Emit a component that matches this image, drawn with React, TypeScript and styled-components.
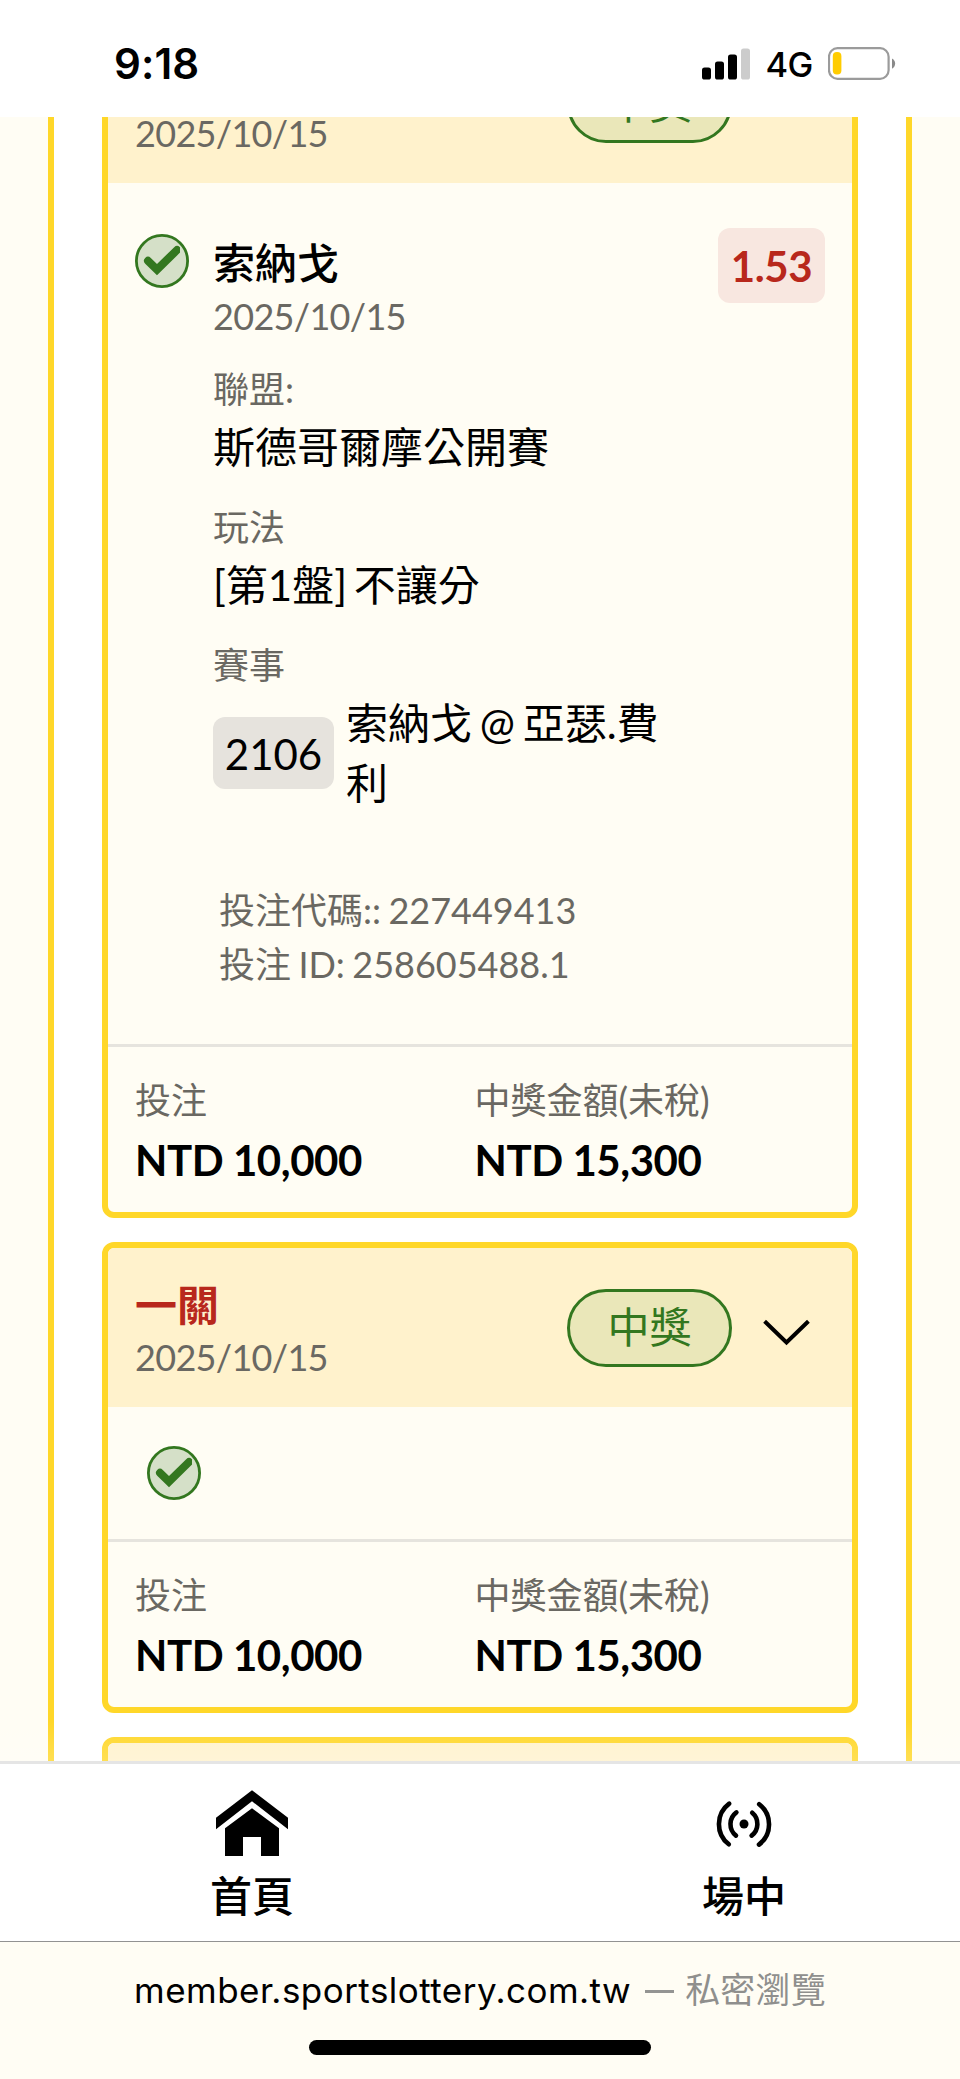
import React from "react";
import styled, { createGlobalStyle } from "styled-components";

const color = {
  cream: "#fffdf4",
  yellow: "#ffd729",
  header: "#fff2cc",
  green: "#33771f",
  red: "#b8281c",
  grey: "#6a6862",
  line: "#e6e4de",
};

const GlobalStyle = createGlobalStyle`
  * { box-sizing: border-box; }
  body {
    margin: 0;
    background: ${color.cream};
    color: #000;
    font-family: Lato, "Noto Sans CJK TC", sans-serif;
    -webkit-font-smoothing: antialiased;
  }
  svg { display: block; flex: none; }
`;

const Screen = styled.div`
  width: 960px;
  height: 2079px;
  display: flex;
  flex-direction: column;
  overflow: hidden;
`;

/* ---------- status bar ---------- */

const StatusBar = styled.header`
  flex: none;
  height: 117px;
  padding: 10px 64px 0 114px;
  display: flex;
  align-items: center;
  justify-content: space-between;
  background: #fff;
  font-family: Inter, sans-serif;
`;

const Clock = styled.span`
  font-size: 42px;
  line-height: 54px;
  font-weight: 600;
  letter-spacing: 0.1px;
`;

const StatusIcons = styled.div`
  display: flex;
  align-items: center;
`;

const Network = styled.span`
  width: 78px;
  padding-top: 3px;
  text-align: center;
  font-size: 34.5px;
  line-height: 44px;
  font-weight: 500;
  letter-spacing: -0.6px;
`;

/* ---------- scrolled page ---------- */

const Viewport = styled.main`
  position: relative;
  flex: 1;
  min-height: 0;
  padding: 0 48px;
  overflow: hidden;
  background: ${color.cream};

  &::after {
    content: "";
    position: absolute;
    inset: auto 0 0 0;
    height: 40px;
    background: linear-gradient(rgba(255, 255, 255, 0), rgba(255, 255, 255, 0.2));
  }
`;

const Sheet = styled.div`
  height: 1900px;
  padding: 0 48px;
  border: solid ${color.yellow};
  border-width: 0 6px;
  background: #fff;
`;

const CardList = styled.div`
  display: flex;
  flex-direction: column;
  gap: 24px;
  margin-top: -99px;
`;

const Card = styled.article`
  border: 6px solid ${color.yellow};
  border-radius: 12px;
  overflow: hidden;
  background: ${color.cream};
`;

const CardHeader = styled.div`
  display: flex;
  height: 159px;
  padding: 0 42px 23px 27px;
  background: ${color.header};
`;

const Heading = styled.div`
  flex: 1;
  display: flex;
  flex-direction: column;
  justify-content: flex-end;
`;

const Title = styled.h2`
  margin: 0;
  font-size: 42px;
  line-height: 50px;
  font-weight: 700;
  color: ${color.red};
`;

const Muted = styled.div`
  font-size: 36px;
  line-height: 54px;
  color: ${color.grey};
`;

const DateText = styled(Muted)`
  letter-spacing: -0.68px;
`;

const Status = styled.span`
  display: flex;
  align-items: center;
  justify-content: center;
  width: 165px;
  height: 78px;
  margin: 41px 30px 0 0;
  padding-bottom: 2px;
  border: 3px solid ${color.green};
  border-radius: 39px;
  background: #eae7b9;
  color: ${color.green};
  font-size: 42px;
  line-height: 70px;
`;

const ChevronSlot = styled.div<{ $open: boolean }>`
  height: 27px;
  margin-top: ${({ $open }) => ($open ? 62 : 71)}px;
  transform: ${({ $open }) => ($open ? "scaleY(-1)" : "none")};
`;

const Body = styled.div`
  display: flex;
  align-items: flex-start;
  height: 861px;
  padding: 45px 27px 0;
`;

const CollapsedBody = styled.div`
  height: 132px;
  padding: 39px;
`;

const CheckSlot = styled.div`
  padding-top: 6px;
  margin-right: 24px;
`;

const Details = styled.div`
  flex: 1;
  padding-top: 10px;
`;

const Name = styled.div`
  font-size: 42px;
  line-height: 51px;
  font-weight: 500;
`;

const Field = styled.div<{ $gap?: number }>`
  margin-top: ${({ $gap = 22 }) => $gap}px;
`;

const Value = styled.div`
  font-size: 42px;
  line-height: 62px;
  word-spacing: -4px;
`;

const EventRow = styled.div`
  display: flex;
  align-items: center;
  gap: 12px;
  margin-top: 1px;
`;

const EventCode = styled.span`
  flex: none;
  width: 121px;
  height: 72px;
  border-radius: 12px;
  background: #e6e3dd;
  text-align: center;
  font-size: 42px;
  line-height: 74px;
`;

const EventName = styled.span`
  width: 320px;
  font-size: 42px;
  line-height: 60px;
  word-spacing: -3px;
`;

const Codes = styled.div`
  margin: 70px 0 0 6px;
  word-spacing: -1.8px;
`;

const Odds = styled.span`
  width: 107px;
  height: 75px;
  border-radius: 12px;
  background: #f8e7e0;
  color: ${color.red};
  text-align: center;
  font-size: 42px;
  line-height: 77px;
  font-weight: 700;
  letter-spacing: -0.4px;
`;

const Totals = styled.div`
  display: grid;
  grid-template-columns: 339.5px 1fr;
  height: 168px;
  padding: 26px 27px 0;
  border-top: 3px solid ${color.line};
`;

const Amount = styled.div`
  font-size: 42px;
  line-height: 66px;
  font-weight: 700;
  letter-spacing: -0.44px;
`;

/* ---------- bottom bars ---------- */

const TabBar = styled.nav`
  flex: none;
  display: flex;
  justify-content: space-between;
  height: 180px;
  padding: 24px 174px 0 210px;
  border-top: 3px solid #e5e5e5;
  background: #fff;
`;

const Tab = styled.a`
  display: flex;
  flex-direction: column;
  align-items: center;
  gap: 9px;
  font-size: 42px;
  line-height: 54px;
  font-weight: 500;
`;

const AddressBar = styled.footer`
  flex: none;
  display: flex;
  flex-direction: column;
  align-items: center;
  height: 138px;
  padding-top: 26px;
  border-top: 1px solid #929292;
  background: ${color.cream};
`;

const Address = styled.div`
  display: flex;
  align-items: center;
  font-family: Inter, "Noto Sans CJK TC", sans-serif;
  font-size: 35px;
  line-height: 44px;
  letter-spacing: 0.46px;
  white-space: nowrap;
`;

const PrivateLabel = styled.span`
  display: flex;
  align-items: center;
  margin-left: 14px;
  letter-spacing: 0.2px;
  color: #8f8f8d;
`;

const Dash = styled.span`
  width: 29px;
  height: 3px;
  margin: 2px 11px 0 0;
  background: #949492;
`;

const HomeIndicator = styled.div`
  width: 342px;
  height: 15px;
  margin-top: 28px;
  border-radius: 8px;
  background: #000;
`;

/* ---------- icons ---------- */

const Signal = () => (
  <svg width="48" height="32" viewBox="0 0 48 32">
    <rect x="0" y="19.5" width="9" height="12" rx="2.6" />
    <rect x="13" y="13.5" width="9" height="18" rx="2.6" />
    <rect x="26" y="6.5" width="9" height="25" rx="2.6" />
    <rect x="39" y="0.5" width="9" height="31" rx="2.6" fill="#ccc" />
  </svg>
);

const Battery = () => (
  <svg width="68" height="33" viewBox="0 0 68 33">
    <rect x="1" y="1.2" width="59.6" height="30.6" rx="8.5" fill="none" stroke="#9b9b9b" strokeWidth="2.2" />
    <rect x="4.8" y="5" width="8.6" height="22.6" rx="4" fill="#fc0" />
    <path d="M64 11.5c4.2 2 4.2 8.2 0 10.2z" fill="#8a8a8a" />
  </svg>
);

const Check = () => (
  <svg width="54" height="54" viewBox="0 0 54 54">
    <circle cx="27" cy="27" r="25.6" fill="#d5e0c8" stroke={color.green} strokeWidth="2.8" />
    <svg width="45" height="54">
      <path
        d="M13 26.8l9 8.8L42 16"
        fill="none"
        stroke={color.green}
        strokeWidth="8"
        strokeLinecap="round"
        strokeLinejoin="miter"
      />
    </svg>
  </svg>
);

const Chevron = () => (
  <svg width="48" height="27" viewBox="0 0 48 27">
    <path d="M2.6 2.3l21.9 21.2L46.4 2.3" fill="none" stroke="#000" strokeWidth="4" />
  </svg>
);

const Home = () => (
  <svg width="72" height="72" viewBox="0 0 72 72">
    <path d="M36 2.3L72 29.7v11.6L36 13.3 0 41.3V29.7z" />
    <path d="M36 20.3l27 20V68H45V49H27v19H9V40.3z" />
  </svg>
);

const Live = () => (
  <svg width="72" height="72" viewBox="0 0 72 72" fill="none" stroke="#000" strokeWidth="4.6" strokeLinecap="round">
    <path d="M21.2 15.7a25.5 25.5 0 0 0-.4 40.6" />
    <path d="M28.4 24.4a14.6 14.6 0 0 0-.4 23.2" />
    <path d="M51.2 16.2a25.5 25.5 0 0 1-.2 40.4" />
    <path d="M44.2 24.8a14.6 14.6 0 0 1-.6 22.8" />
    <circle cx="36" cy="36" r="4.5" fill="#000" stroke="none" />
  </svg>
);

/* ---------- page ---------- */

const BetHeader = ({ title, date, open = false }: { title?: string; date: string; open?: boolean }) => (
  <CardHeader>
    <Heading>
      {title && <Title>{title}</Title>}
      <DateText>{date}</DateText>
    </Heading>
    <Status>中獎</Status>
    <ChevronSlot $open={open}>
      <Chevron />
    </ChevronSlot>
  </CardHeader>
);

const BetTotals = ({ stake, payout }: { stake: string; payout: string }) => (
  <Totals>
    <div>
      <Muted>投注</Muted>
      <Amount>{stake}</Amount>
    </div>
    <div>
      <Muted>中獎金額(未稅)</Muted>
      <Amount>{payout}</Amount>
    </div>
  </Totals>
);

export default function App() {
  return (
    <Screen lang="zh-TW">
      <GlobalStyle />
      <StatusBar>
        <Clock>9:18</Clock>
        <StatusIcons>
          <Signal />
          <Network>4G</Network>
          <Battery />
        </StatusIcons>
      </StatusBar>

      <Viewport>
        <Sheet>
          <CardList>
            <Card>
              <BetHeader date="2025/10/15" open />
              <Body>
                <CheckSlot>
                  <Check />
                </CheckSlot>
                <Details>
                  <Name>索納戈</Name>
                  <DateText>2025/10/15</DateText>
                  <Field $gap={19}>
                    <Muted>聯盟:</Muted>
                    <Value>斯德哥爾摩公開賽</Value>
                  </Field>
                  <Field>
                    <Muted>玩法</Muted>
                    <Value>[第1盤] 不讓分</Value>
                  </Field>
                  <Field>
                    <Muted>賽事</Muted>
                    <EventRow>
                      <EventCode>2106</EventCode>
                      <EventName>索納戈 @ 亞瑟.費利</EventName>
                    </EventRow>
                  </Field>
                  <Codes>
                    <Muted>投注代碼:: 227449413</Muted>
                    <Muted>投注 ID: 258605488.1</Muted>
                  </Codes>
                </Details>
                <Odds>1.53</Odds>
              </Body>
              <BetTotals stake="NTD 10,000" payout="NTD 15,300" />
            </Card>

            <Card>
              <BetHeader title="一關" date="2025/10/15" />
              <CollapsedBody>
                <Check />
              </CollapsedBody>
              <BetTotals stake="NTD 10,000" payout="NTD 15,300" />
            </Card>

            <Card>
              <CardHeader />
            </Card>
          </CardList>
        </Sheet>
      </Viewport>

      <TabBar>
        <Tab>
          <Home />
          首頁
        </Tab>
        <Tab>
          <Live />
          場中
        </Tab>
      </TabBar>

      <AddressBar>
        <Address>
          member.sportslottery.com.tw
          <PrivateLabel>
            <Dash />
            私密瀏覽
          </PrivateLabel>
        </Address>
        <HomeIndicator />
      </AddressBar>
    </Screen>
  );
}
